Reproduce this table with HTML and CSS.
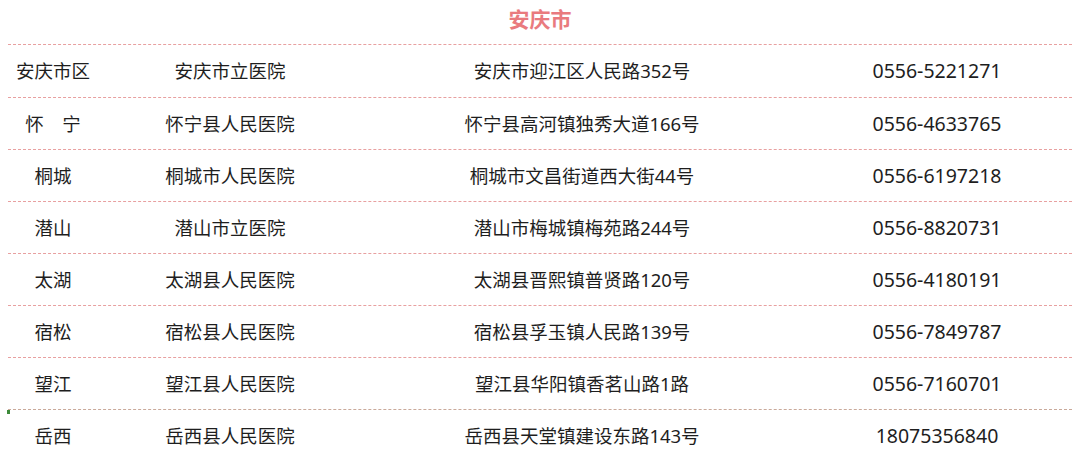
FILE: index.html
```html
<!DOCTYPE html>
<html lang="zh">
<head>
<meta charset="utf-8">
<link rel="stylesheet" href="styles.css">
</head>
<body>
<div class="page">
  <h2 class="title">安庆市</h2>
  <div class="list">
    <div class="row first"><span>安庆市区</span><span>安庆市立医院</span><span>安庆市迎江区人民路352号</span><span class="tel">0556-5221271</span></div>
    <div class="row"><span>怀　宁</span><span>怀宁县人民医院</span><span>怀宁县高河镇独秀大道166号</span><span class="tel">0556-4633765</span></div>
    <div class="row"><span>桐城</span><span>桐城市人民医院</span><span>桐城市文昌街道西大街44号</span><span class="tel">0556-6197218</span></div>
    <div class="row"><span>潜山</span><span>潜山市立医院</span><span>潜山市梅城镇梅苑路244号</span><span class="tel">0556-8820731</span></div>
    <div class="row"><span>太湖</span><span>太湖县人民医院</span><span>太湖县晋熙镇普贤路120号</span><span class="tel">0556-4180191</span></div>
    <div class="row"><span>宿松</span><span>宿松县人民医院</span><span>宿松县孚玉镇人民路139号</span><span class="tel">0556-7849787</span></div>
    <div class="row"><span>望江</span><span>望江县人民医院</span><span>望江县华阳镇香茗山路1路</span><span class="tel">0556-7160701</span></div>
    <div class="row last"><span>岳西</span><span>岳西县人民医院</span><span>岳西县天堂镇建设东路143号</span><span class="tel">18075356840</span></div>
  </div>
</div>
</body>
</html>
```
FILE: styles.css
```css
html, body {
  margin: 0;
  padding: 0;
  background: #fff;
}
.page {
  padding: 0 8px;
  font-family: "Noto Sans", "Noto Sans CJK SC", sans-serif;
  color: #1e1e1e;
  font-size: 18px;
}
.title {
  margin: 0;
  height: 44px;
  line-height: 38px;
  text-align: center;
  font-size: 21px;
  font-weight: bold;
  color: #e97a7e;
}
.row {
  display: grid;
  grid-template-columns: 90px 264px 440px 270px;
  height: 52px;
  align-items: center;
  border-top: 1px dashed #e8a0a0;
  box-sizing: border-box;
  line-height: 24px;
}
.row.first {
  height: 53px;
}
.row.last {
  position: relative;
  border-top-color: #c9a99a;
}
.row.last::before {
  content: "";
  position: absolute;
  left: -1px;
  top: 0;
  width: 2px;
  height: 3px;
  background: #3d8a3a;
  border-top: 1px solid #3d8a3a;
  width: 3px;
}
.row span {
  text-align: center;
  white-space: nowrap;
  font-size: 18.5px;
}
.row .tel {
  font-size: 19.5px;
}
```
